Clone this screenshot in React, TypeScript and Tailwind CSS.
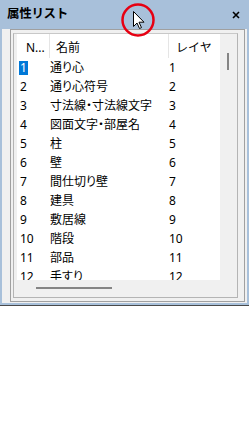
const ROWS: [string, string, string][] = [
  ['1', '通り心', '1'],
  ['2', '通り心符号', '2'],
  ['3', '寸法線・寸法線文字', '3'],
  ['4', '図面文字・部屋名', '4'],
  ['5', '柱', '5'],
  ['6', '壁', '6'],
  ['7', '間仕切り壁', '7'],
  ['8', '建具', '8'],
  ['9', '敷居線', '9'],
  ['10', '階段', '10'],
  ['11', '部品', '11'],
  ['12', '手すり', '12'],
];

function Cursor() {
  return (
    <svg className="absolute left-[121px] top-[3px]" width="36" height="36" viewBox="0 0 36 36">
      <circle cx="17" cy="17" r="15.5" fill="none" stroke="#e60012" strokeWidth="2.5" />
      <path
        d="M12.5 8.5 L12.5 23.5 L16 20 L18.5 25.5 L20.5 24.6 L18 19.2 L23 19.2 Z"
        fill="#fff"
        stroke="#000"
        strokeWidth="1"
        strokeLinejoin="round"
      />
    </svg>
  );
}

export default function App() {
  return (
    <div className="relative w-[249px] h-[429px] bg-white text-[12px] text-black font-['Noto_Sans','Noto_Sans_CJK_JP',sans-serif]">
      <div className="flex flex-col h-[305px] border-x-2 border-b-2 border-[#a8c0da] shadow-[0_1px_0_#4a4a4a] bg-[#f0f0f0]">
        {/* title bar */}
        <div className="shrink-0 flex items-center justify-between h-[29px] bg-[#a8c0da] -mx-[2px] pl-[7px] pr-[7px]">
          <span className="font-bold text-[12.5px] leading-none tracking-[-0.3px]">属性リスト</span>
          <svg width="8" height="8" viewBox="0 0 8 8" className="mr-[2px]">
            <path d="M1 1 L7 7 M7 1 L1 7" stroke="#000" strokeWidth="1.6" />
          </svg>
        </div>

        {/* body */}
        <div className="flex-1 min-h-0 flex pl-[8px] pr-[2px] pb-[1px]">
          <div className="flex-1 min-h-0 flex border border-[#a0a0a0] pt-[3px] pl-[2px] pr-[6px] pb-[3px]">
            <div className="flex-1 min-h-0 flex border border-[#b4b4b4] border-t-[#c8c8c8] pl-[3px] pr-[3px] pb-[4px]">
              <div className="flex-1 min-h-0 grid grid-cols-[1fr_14px] grid-rows-[minmax(0,1fr)_13px]">
                {/* list content */}
                <div className="bg-white overflow-hidden min-h-0 flex flex-col">
                  <div className="grid grid-cols-[32px_119px_51px] h-[24px] shrink-0">
                    <div className="pl-[9px] pt-[5px]">N...</div>
                    <div className="border-l border-[#e5e5e5] pl-[6px] pt-[5px]">名前</div>
                    <div className="border-l border-[#e5e5e5] pl-[7px] pt-[5px]">レイヤ</div>
                  </div>
                  <div className="flex-1 min-h-0 overflow-hidden">
                    {ROWS.map(([no, name, layer]) => (
                      <div key={no} className="grid grid-cols-[32px_118px_52px] h-[19px] items-center">
                        <div className="pl-[2px]">
                          {no === '1' ? (
                            <span className="bg-[#0078d7] text-white px-[1px] inline-block leading-[14px]">{no}</span>
                          ) : (
                            <span className="pl-[1px]">{no}</span>
                          )}
                        </div>
                        <div className="pl-[1px] whitespace-nowrap [font-feature-settings:'palt']">{name}</div>
                        <div className="pl-[2px]">{layer}</div>
                      </div>
                    ))}
                  </div>
                </div>
                {/* vertical scrollbar */}
                <div className="bg-[#f0f0f0] pt-[19px] pl-[7px]">
                  <div className="w-[2px] h-[17px] bg-[#858585]" />
                </div>
                {/* horizontal scrollbar */}
                <div className="bg-[#f0f0f0] pt-[7px] pl-[19px]">
                  <div className="w-[76px] h-[2px] bg-[#858585]" />
                </div>
                <div className="bg-[#f0f0f0]" />
              </div>
            </div>
          </div>
        </div>
      </div>
      <Cursor />
    </div>
  );
}
